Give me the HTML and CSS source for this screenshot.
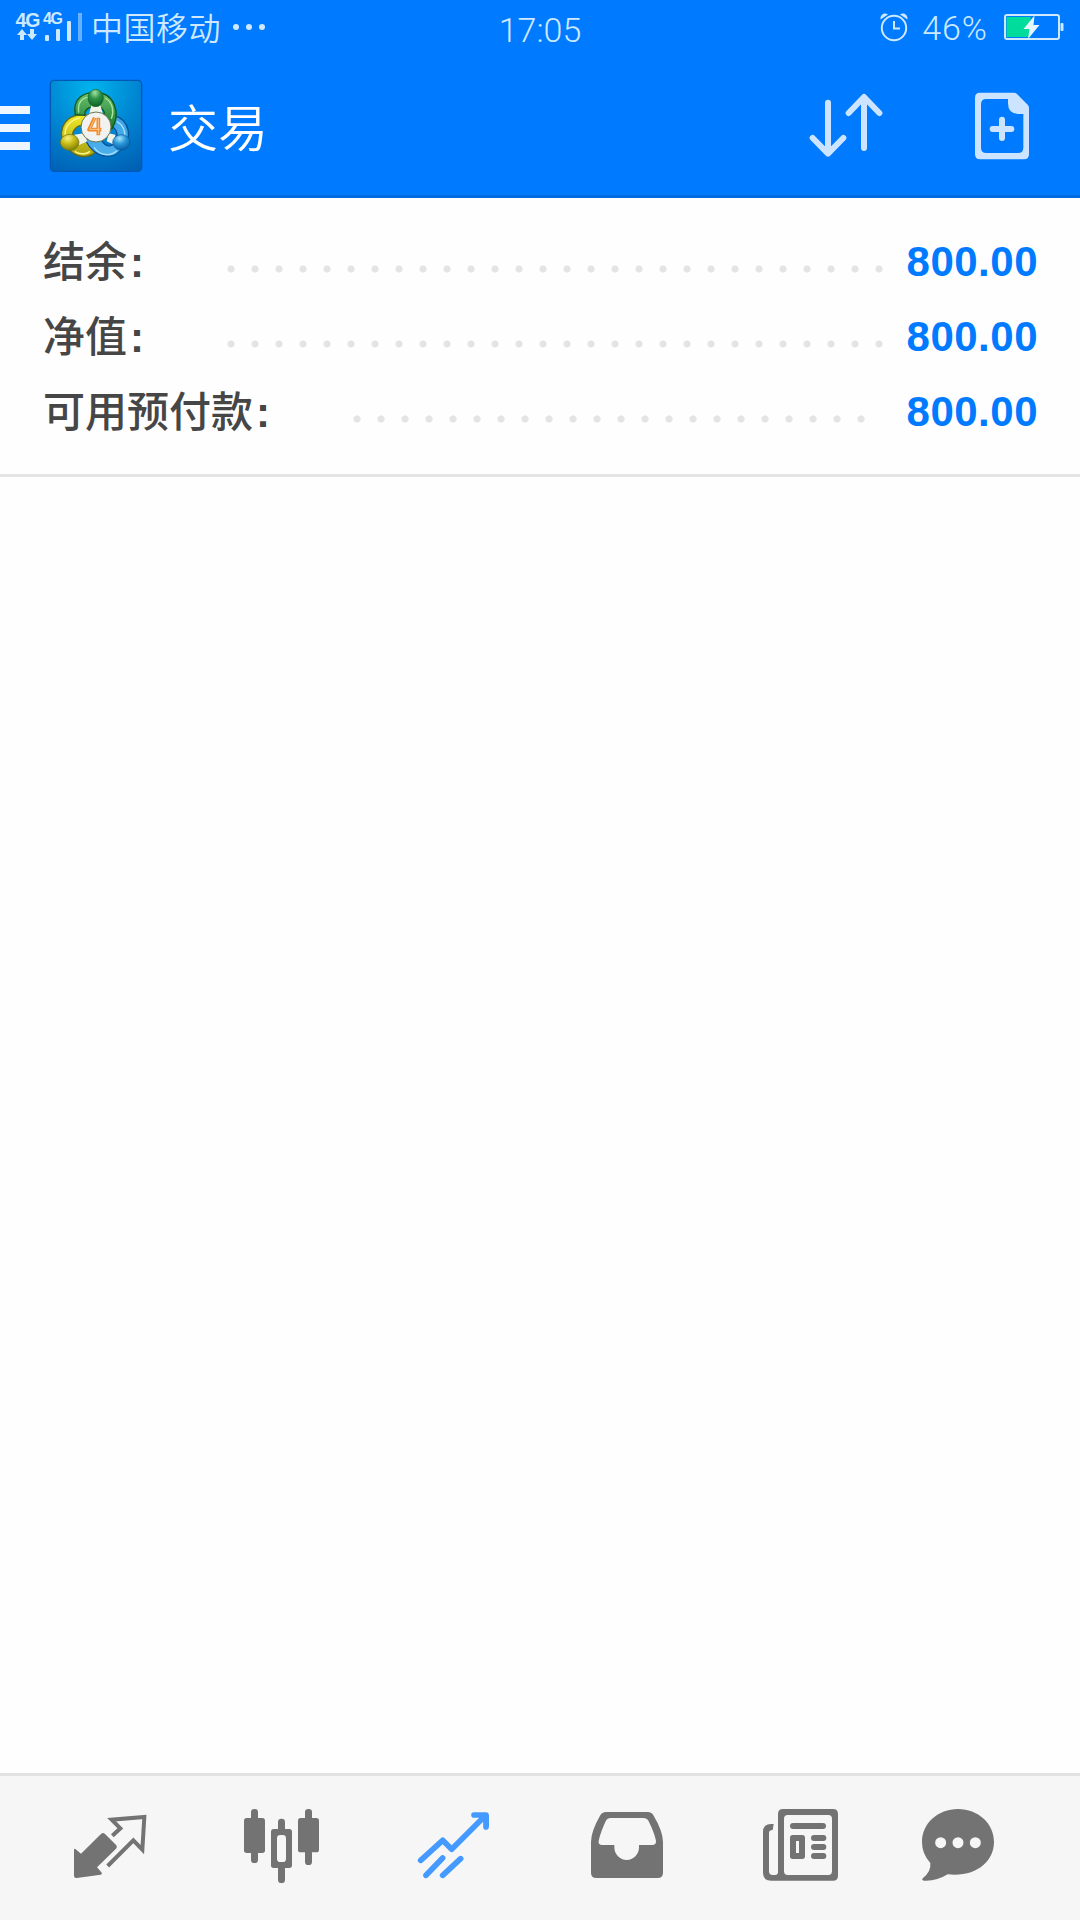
FILE: index.html
```html
<!DOCTYPE html>
<html lang="zh-CN">
<head>
  <meta charset="UTF-8" />
  <meta name="viewport" content="width=device-width, initial-scale=1.0" />
  <title>交易</title>
  <link rel="stylesheet" href="styles.css">
</head>
<body>

<div class="status-bar">
  <div class="status-left">
    <svg class="signal" viewBox="0 0 68 32">
      <text x="-0.5" y="17" font-size="19.5" textLength="25">4G</text>
      <text x="27" y="14" font-size="16" textLength="20">4G</text>
      <path d="M6 19l5 6H8v5H4v-5H1zM16 30l-5-6h3v-5h4v5h3z" />
      <rect x="29" y="25" width="4" height="6" rx="1" />
      <rect x="40" y="19" width="4" height="12" rx="1" />
      <rect x="51" y="11" width="4" height="20" rx="1" />
      <rect x="62" y="3" width="4" height="28" opacity="0.5" />
    </svg>
    <span class="carrier">中国移动</span>
    <span class="more"><i></i><i></i><i></i></span>
  </div>
  <div class="clock">17:05</div>
  <div class="status-right">
    <svg class="alarm" viewBox="0 0 28 30">
      <circle cx="14" cy="16" r="12.2" fill="none" stroke="#cce9ff" stroke-width="2" />
      <path d="M14 9v7.5h6" fill="none" stroke="#cce9ff" stroke-width="2" />
      <path d="M0.5 7.5C0 3 4 0 8 2.5zM27.500 7.500C28 3 24 0 20 2.500z" fill="#cce9ff" />
    </svg>
    <span class="percent">46%</span>
    <svg class="battery" viewBox="0 0 60 26">
      <rect x="1" y="1" width="54" height="24" rx="2" fill="none" stroke="#cce9ff" stroke-width="2" />
      <rect x="2.500" y="3" width="24" height="20" fill="#00dc9b" />
      <rect x="56.500" y="9" width="3" height="8" rx="1" fill="#cce9ff" />
      <path d="M30.500 1.500L19.500 15h6l-1.500 10L35.500 11h-6z" fill="#e4f6ff" />
    </svg>
  </div>
</div>

<div class="header">
  <div class="menu"><i></i><i></i><i></i></div>
  <svg class="logo" viewBox="147 57 282 282">
    <defs>
      <radialGradient id="tile" cx="0.45" cy="0.1" r="1">
        <stop offset="0" stop-color="#00b4ee" />
        <stop offset="0.5" stop-color="#0086d2" />
        <stop offset="1" stop-color="#0060b4" />
      </radialGradient>
      <linearGradient id="green" x1="0" y1="0" x2="0" y2="1">
        <stop offset="0" stop-color="#6cc070" />
        <stop offset="1" stop-color="#18792c" />
      </linearGradient>
      <linearGradient id="yellow" x1="0" y1="0" x2="0" y2="1">
        <stop offset="0" stop-color="#f2ea28" />
        <stop offset="1" stop-color="#a8a010" />
      </linearGradient>
      <linearGradient id="blue" x1="0" y1="0" x2="0" y2="1">
        <stop offset="0" stop-color="#3ca4e4" />
        <stop offset="1" stop-color="#4cb0ec" />
      </linearGradient>
      <radialGradient id="greenBall" cx="0.45" cy="0.2" r="0.8">
        <stop offset="0" stop-color="#a4e0a4" />
        <stop offset="0.45" stop-color="#2c9448" />
        <stop offset="1" stop-color="#0c6024" />
      </radialGradient>
      <radialGradient id="yellowBall" cx="0.4" cy="0.25" r="0.8">
        <stop offset="0" stop-color="#f8f080" />
        <stop offset="0.45" stop-color="#c8bc18" />
        <stop offset="1" stop-color="#787808" />
      </radialGradient>
      <radialGradient id="blueBall" cx="0.4" cy="0.25" r="0.8">
        <stop offset="0" stop-color="#a8e4fc" />
        <stop offset="0.45" stop-color="#2898d8" />
        <stop offset="1" stop-color="#0858a0" />
      </radialGradient>
    </defs>
    <rect x="151" y="61" width="274" height="273" rx="12" fill="url(#tile)" stroke="#0058b4" stroke-width="4" />
    <!-- arms -->
    <path d="M258 164C184 156 164 236 206 264C220 290 262 300 286 276L262 236C244 254 222 252 218 230C216 210 230 194 258 194z" fill="url(#yellow)" stroke="#666c18" stroke-width="4" />
    <path d="M340 166C392 178 398 242 366 264C346 300 286 300 256 240L300 230C312 262 334 264 344 246C358 226 350 204 330 196z" fill="url(#blue)" stroke="#0a509a" stroke-width="4" />
    <path d="M226 164C216 114 252 96 288 98C342 98 364 158 336 206L308 198C320 164 314 140 288 140C264 140 254 148 254 166z" fill="url(#green)" stroke="#10581c" stroke-width="4" />
    <path d="M236 158C232 126 248 112 266 112M316 114C340 128 342 158 334 176" fill="none" stroke="#a8e4a0" stroke-width="4" />
    <path d="M196 226C192 200 214 178 240 174M224 274C240 286 262 282 270 274" fill="none" stroke="#faf27c" stroke-width="5" />
    <path d="M350 184C368 194 376 212 374 228M282 262C300 288 332 290 350 272" fill="none" stroke="#a4e2fc" stroke-width="4" />
    <!-- connectors to the heads -->
    <path d="M274 136l-6 24h40l-7-24zM222 224l30-4 10 24-26 12zM326 220l20 4-4 30-22-10z" fill="#f0f4e8" />
    <ellipse cx="287" cy="114" rx="23" ry="26" fill="url(#greenBall)" stroke="#14642c" stroke-width="2" />
    <ellipse cx="209" cy="247" rx="28" ry="24" fill="url(#yellowBall)" stroke="#707010" stroke-width="2" />
    <ellipse cx="364" cy="247" rx="26" ry="23" fill="url(#blueBall)" stroke="#08589c" stroke-width="2" />
    <circle cx="288" cy="201" r="45" fill="#f2f2f2" stroke="#6a7a50" stroke-width="3" />
    <path d="M284 173L267 209H304M295 173V226" fill="none" stroke="#f08a24" stroke-width="11" stroke-linejoin="round" />
    <path d="M284 175L269 208H301M295 176V223" fill="none" stroke="#fbc48c" stroke-width="3" />
  </svg>
  <div class="title">交易</div>
  <svg class="action sort" viewBox="84 78 240 240">
    <path d="M144 128V280M98 234L144 281L190 234M252 264V112M206 159L252 111L298 159" />
    <path class="solid" d="M124 262h40l-20 22zM232 132h40l-20-22z" />
  </svg>
  <svg class="action" viewBox="546 78 240 240">
    <path class="solid" fill-rule="evenodd" d="M600 98H702Q707 98 711 102L743 134Q747 138 747 143V283Q747 298 732 298H600Q585 298 585 283V113Q585 98 600 98zM619 117Q603 117 603 133V263Q603 279 619 279H714Q730 279 730 263V162H716Q684 162 684 130V117z" />
    <path d="M666 179V234M638 207H694" />
  </svg>
</div>

<div class="account">
  <div class="row">
    <span class="label">结余<b>:</b></span>
    <span class="dots"></span>
    <span class="value">800.00</span>
  </div>
  <div class="row">
    <span class="label">净值<b>:</b></span>
    <span class="dots"></span>
    <span class="value">800.00</span>
  </div>
  <div class="row">
    <span class="label">可用预付款<b>:</b></span>
    <span class="dots dots-short"></span>
    <span class="value">800.00</span>
  </div>
</div>

<div class="content"></div>

<div class="tabs">
  <!-- quotes -->
  <a class="tab"><svg viewBox="90 144 240 240">
    <path d="M102 270Q102 264 107 268L123 281L183 222Q189 216 195 222L229 256Q233 261 228 266L171 322L184 337Q188 342 182 344L110 354Q102 355 102 347z" />
    <path class="line" d="M217 227L241 205L215 179L313 171L307 269L280 241L203 318" />
  </svg></a>
  <!-- charts -->
  <a class="tab"><svg viewBox="606 144 240 240">
    <rect x="612" y="174" width="63" height="105" rx="8" />
    <rect x="633" y="147" width="21" height="162" rx="10" />
    <rect x="774" y="174" width="63" height="103" rx="8" />
    <rect x="795" y="147" width="21" height="168" rx="10" />
    <rect x="714" y="176" width="21" height="193" rx="10" />
    <rect x="693" y="207" width="63" height="117" rx="8" />
    <rect class="hole" x="711" y="225" width="27" height="81" rx="10" />
  </svg></a>
  <!-- trade -->
  <a class="tab active"><svg viewBox="102 144 240 240">
    <path class="line" d="M122 301L188 241L215 268L317 166M282 165H318V201M188 294L138 346M242 296L188 346" />
    <path d="M290 165H327V202z" />
  </svg></a>
  <!-- history -->
  <a class="tab"><svg viewBox="618 144 240 240">
    <path d="M678 156H803Q815 156 821 167Q849 214 849 246V338Q849 354 833 354H649Q633 354 633 338V246Q633 214 660 167Q666 156 678 156z" />
    <path class="hole" d="M692 174H789Q801 174 806 184Q822 216 828 242Q829 255 816 255H777V262A37 38 0 0 1 703 262V255H667Q654 255 656 242Q662 216 677 184Q682 174 692 174z" />
  </svg></a>
  <!-- news -->
  <a class="tab"><svg viewBox="114 144 240 240">
    <path d="M189 147H339Q354 147 354 162V347Q354 362 339 362H154Q129 362 129 338V216Q129 192 153 192H161L158 210Q147 210 147 220V334Q147 345 158 345H165Q174 345 174 336V162Q174 147 189 147z" />
    <rect class="hole" x="192" y="165" width="144" height="180" rx="11" />
    <rect x="210" y="189" width="108" height="18" rx="9" />
    <rect x="210" y="225" width="45" height="72" rx="8" />
    <rect class="hole" x="228" y="243" width="9" height="36" />
    <rect x="273" y="225" width="46" height="18" rx="9" />
    <rect x="273" y="252" width="46" height="18" rx="9" />
    <rect x="273" y="279" width="46" height="18" rx="9" />
  </svg></a>
  <!-- chat -->
  <a class="tab"><svg viewBox="630 144 240 240">
    <path d="M714 147C774 147 822 190 822 246C822 305 768 352 683 343Q650 364 612 362Q603 361 609 354Q634 334 631 309Q606 282 606 246C606 190 654 147 714 147z" />
    <circle class="hole" cx="662" cy="248" r="16.500" />
    <circle class="hole" cx="714" cy="248" r="16.500" />
    <circle class="hole" cx="766" cy="248" r="16.500" />
  </svg></a>
</div>

</body>
</html>
```
FILE: styles.css
```css
* {
  box-sizing: border-box;
}

body {
  margin: 0;
  height: 1920px;
  display: flex;
  flex-direction: column;
  background-color: #fefefe;
  font-family: "Liberation Sans", "Noto Sans CJK SC", sans-serif;
  overflow: hidden;
}

svg {
  display: block;
  flex: none;
  overflow: visible;
}

/* Status bar */
.status-bar {
  height: 57px;
  display: grid;
  grid-template-columns: 1fr auto 1fr;
  background-color: #007aff;
  color: #cce9ff;
}

.status-left,
.status-right {
  display: flex;
  align-items: flex-start;
}

.status-left {
  padding-left: 16px;
}

.signal {
  width: 68px;
  height: 32px;
  margin-top: 10px;
  fill: #cce9ff;
  font-weight: bold;
}

.carrier {
  margin: 3px 0 0 7px;
  font-family: "Noto Sans CJK SC", sans-serif;
  font-size: 32px;
  font-weight: 350;
  line-height: 46px;
  letter-spacing: 0.5px;
}

.more {
  display: flex;
  gap: 7px;
  margin: 24px 0 0 12px;
}

.more i {
  width: 6px;
  height: 6px;
  border-radius: 50%;
  background-color: #cce9ff;
}

.clock,
.percent {
  font-family: Roboto, sans-serif;
  font-size: 34px;
  font-weight: 300;
  line-height: 40px;
}

.clock {
  padding-top: 10px;
}

.status-right {
  justify-content: flex-end;
  padding-right: 16px;
}

.alarm {
  width: 28px;
  height: 30px;
  margin-top: 12px;
}

.percent {
  margin: 8px 16px 0 14px;
  letter-spacing: 1px;
}

.battery {
  width: 60px;
  height: 26px;
  margin-top: 14px;
}

/* Header */
.header {
  height: 141px;
  display: flex;
  align-items: center;
  background-color: #007aff;
  border-bottom: 3px solid #006be0;
  padding-right: 38px;
}

.menu {
  width: 30px;
  margin-top: 4px;
  display: flex;
  flex-direction: column;
  gap: 10px;
}

.menu i {
  height: 8px;
  background-color: #f0f6ff;
}

.logo {
  width: 94px;
  height: 94px;
  margin-left: 19px;
}

.title {
  flex: 1;
  margin: 0 0 3px 25px;
  color: #fff;
  font-family: "Noto Sans CJK SC", sans-serif;
  font-size: 50px;
  font-weight: 350;
  line-height: 70px;
}

.action {
  width: 80px;
  height: 80px;
  fill: none;
  stroke: #cce4ff;
  stroke-width: 18;
  stroke-linecap: round;
  stroke-linejoin: round;
}

.action .solid {
  fill: #cce4ff;
  stroke: none;
}

.sort {
  margin-right: 74px;
}

/* Account summary */
.account {
  height: 279px;
  padding: 26px 42px 0 43px;
  border-bottom: 3px solid #e4e4e4;
}

.row {
  height: 75px;
  display: flex;
  align-items: center;
}

.label {
  padding-top: 2px;
  color: #464646;
  font-size: 42px;
  font-weight: 500;
  line-height: 60px;
  white-space: nowrap;
}

.label b {
  margin-left: 3px;
}

.dots {
  width: 672px;
  height: 8px;
  margin: 14px 0 0 auto;
  background: radial-gradient(circle, #e4e4e4 3.2px, transparent 4px) 0 0 / 24px 8px repeat-x;
}

.dots-short {
  width: 528px;
  margin-right: 18px;
}

.value {
  margin-left: 16px;
  color: #007aff;
  font-size: 42px;
  font-weight: bold;
  letter-spacing: 0.5px;
}

.content {
  flex: 1;
}

/* Bottom tabs */
.tabs {
  height: 147px;
  display: flex;
  padding: 0 24px;
  background-color: #f6f6f6;
  border-top: 3px solid #e2e2e2;
}

.tab {
  flex: 1;
  display: flex;
  align-items: center;
  justify-content: center;
  color: #737373;
}

.tab.active {
  color: #459aff;
}

.tab svg {
  width: 80px;
  height: 80px;
  fill: currentColor;
}

.tab .line {
  fill: none;
  stroke: currentColor;
  stroke-width: 17;
  stroke-linecap: round;
  stroke-linejoin: round;
}

.tab:first-child .line {
  stroke-width: 12;
  stroke-linecap: butt;
  stroke-linejoin: miter;
}

.tab .hole {
  fill: #f6f6f6;
}
```
